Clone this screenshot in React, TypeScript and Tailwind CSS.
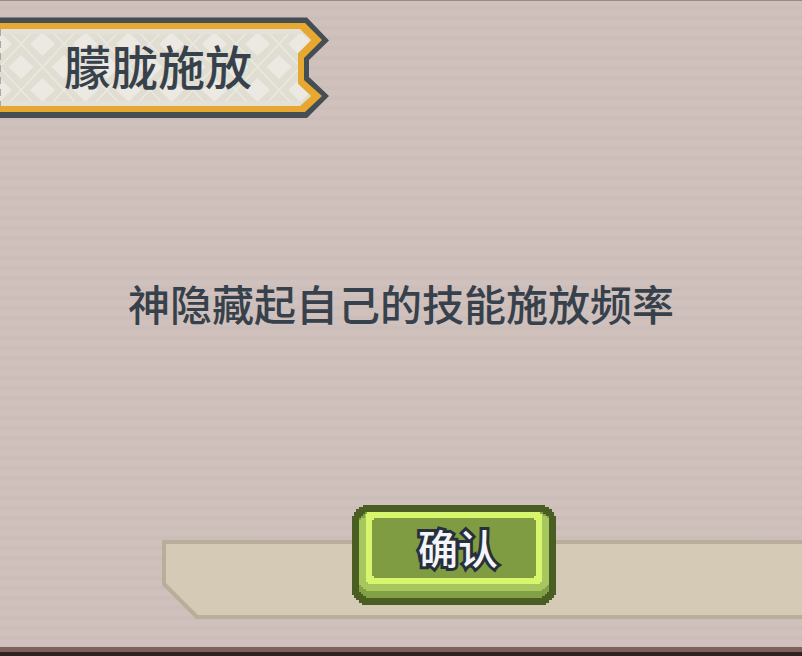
const FONT = "font-['Noto_Sans_CJK_SC','Noto_Sans',sans-serif]";

function BannerFrame() {
  return (
    <svg className="absolute inset-0 h-full w-full" viewBox="0 0 330 101" aria-hidden="true">
      <defs>
        <pattern id="argyle" x="21" y="27" width="43" height="46" patternUnits="userSpaceOnUse">
          <rect width="43" height="46" fill="#e0ded2" />
          <path d="M0 0 43 46 M43 0 0 46" fill="none" stroke="#eae8df" strokeWidth="1.6" />
          <path d="M21.5-12 34 0 21.5 12 9 0Z M21.5 34 34 46 21.5 58 9 46Z" fill="#ebe9e1" />
          <path d="M0 11 12.5 23 0 35-12.5 23Z M43 11 55.5 23 43 35 30.5 23Z" fill="#ebe9e1" />
        </pattern>
        <clipPath id="banner-face">
          <path d="M0 12H300L311 23 298 36V67L311 79 300 89H0Z" />
        </clipPath>
      </defs>
      <path d="M0 0.5H307L329 23.5 309 43V60L329 79 307 101H0Z" fill="#454d55" />
      <path d="M0 6H305L322 23 304 41V63L322 79 305 95H0Z" fill="#e6a831" />
      <g clipPath="url(#banner-face)">
        <rect width="330" height="101" fill="#e4e2d8" />
        <rect y="17" width="330" height="67" fill="url(#argyle)" />
        <path d="M0.5 12V89" stroke="#a9a9a4" strokeWidth="1" strokeDasharray="7 5" />
      </g>
    </svg>
  );
}

function ButtonFrame() {
  return (
    <svg
      className="absolute inset-0 h-full w-full"
      viewBox="0 0 204 100"
      shapeRendering="crispEdges"
      aria-hidden="true"
    >
      <path
        d="M11 0H193V2H197V4H200V7H202V11H204V90H202V93H200V95H197V98H194V100H10V98H7V95H4V93H2V90H0V11H2V7H4V4H7V2H11Z"
        fill="#4a5e24"
      />
      <path d="M13 7H191V9H194V11H197V87H195V89H193V91H190V93H14V91H11V89H9V87H7V13H9V11H11V9H13Z" fill="#82a045" />
      <path d="M13 9H191V11H195V13H197V80H195V82H193V84H190V86H14V84H11V82H9V80H7V15H9V13H13Z" fill="#a6c75d" />
      <path d="M15 7H188V9H190V77H188V79H16V77H14V9H15Z" fill="#d8f66d" />
      <path d="M22 13H182V15H184V71H182V73H22V71H20V15H22Z" fill="#7f9c43" />
    </svg>
  );
}

export default function App() {
  return (
    <main
      className={`flex min-h-screen flex-col overflow-hidden border-t border-[#9c8987] bg-[#cfc0bc] bg-[repeating-linear-gradient(180deg,#d0c1bd_0px,#d0c1bd_4px,#cabcb8_7px,#d0c1bd_10px)] text-[#37414c] ${FONT}`}
    >
      <header className="relative mt-4 flex h-[101px] w-[330px] items-center pb-1.5 pl-16">
        <BannerFrame />
        <h1 className="relative text-[47px] leading-none font-medium">朦胧施放</h1>
      </header>

      <section className="flex flex-1 items-center justify-center px-4 pb-4">
        <p className="text-center text-[42px] leading-[48px] font-medium">神隐藏起自己的技能施放频率</p>
      </section>

      <footer className="grid pb-7">
        <div className="col-start-1 row-start-1 mt-9 ml-[162px] h-[79px] self-start bg-[#b9ae99] pt-1 pb-1 pl-1 [clip-path:polygon(0_0,100%_0,100%_100%,34px_100%,0_45px)]">
          <div className="h-full bg-[#d4cab5] [clip-path:polygon(0_0,100%_0,100%_100%,32px_100%,0_39px)]" />
        </div>
        <button
          type="button"
          className="relative col-start-1 row-start-1 mt-px ml-[352px] flex h-[100px] w-[204px] cursor-pointer items-center justify-center self-start pb-4 pl-2"
        >
          <ButtonFrame />
          <span className="relative text-[40px] leading-none font-medium text-[#f4f5fb] [paint-order:stroke_fill] [-webkit-text-stroke:6px_#272f3b]">
            确认
          </span>
        </button>
      </footer>

      <div className="h-[9px] border-t-[5px] border-[#80605c] bg-[#2e2220]" />
    </main>
  );
}
